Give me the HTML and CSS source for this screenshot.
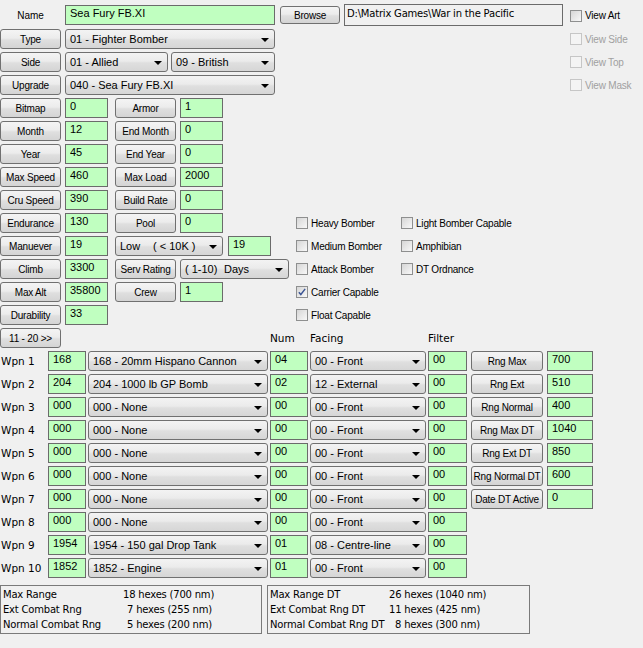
FILE: index.html
```html
<!DOCTYPE html>
<html lang="en">
<head>
    <meta charset="UTF-8">
    <meta name="viewport" content="width=device-width, initial-scale=1.0">
    <title>Aircraft Editor</title>
    <link rel="stylesheet" href="styles.css">
</head>
<body>
    <div class="form">
        <div class="top">
            <div class="name-label">Name</div>
            <input class="field" type="text" value="Sea Fury FB.XI">
            <div class="browse-cell">
                <button class="btn browse">Browse</button>
                <div class="path">D:\Matrix Games\War in the Pacific Admiral's Edition\Art\Aircraft</div>
            </div>
            <label class="check"><span class="box"></span>View Art</label>

            <button class="btn">Type</button>
            <div class="combo">01 - Fighter Bomber</div>
            <div></div>
            <label class="check off"><span class="box"></span>View Side</label>

            <button class="btn">Side</button>
            <div class="pair">
                <div class="combo side1">01 - Allied</div>
                <div class="combo side2">09 - British</div>
            </div>
            <div></div>
            <label class="check off"><span class="box"></span>View Top</label>

            <button class="btn">Upgrade</button>
            <div class="combo">040 - Sea Fury FB.XI</div>
            <div></div>
            <label class="check off"><span class="box"></span>View Mask</label>
        </div>

        <div class="mid">
            <div class="stats">
                <div class="row">
                    <button class="btn">Bitmap</button>
                    <input class="field num" type="text" value="0">
                    <button class="btn second">Armor</button>
                    <input class="field num" type="text" value="1">
                </div>
                <div class="row">
                    <button class="btn">Month</button>
                    <input class="field num" type="text" value="12">
                    <button class="btn second">End Month</button>
                    <input class="field num" type="text" value="0">
                </div>
                <div class="row">
                    <button class="btn">Year</button>
                    <input class="field num" type="text" value="45">
                    <button class="btn second">End Year</button>
                    <input class="field num" type="text" value="0">
                </div>
                <div class="row">
                    <button class="btn">Max Speed</button>
                    <input class="field num" type="text" value="460">
                    <button class="btn second">Max Load</button>
                    <input class="field num" type="text" value="2000">
                </div>
                <div class="row">
                    <button class="btn">Cru Speed</button>
                    <input class="field num" type="text" value="390">
                    <button class="btn second">Build Rate</button>
                    <input class="field num" type="text" value="0">
                </div>
                <div class="row">
                    <button class="btn">Endurance</button>
                    <input class="field num" type="text" value="130">
                    <button class="btn second">Pool</button>
                    <input class="field num" type="text" value="0">
                </div>
                <div class="row">
                    <button class="btn">Manuever</button>
                    <input class="field num" type="text" value="19">
                    <div class="combo alt"><span class="alt-low">Low</span>( &lt; 10K )</div>
                    <input class="field num after-alt" type="text" value="19">
                </div>
                <div class="row">
                    <button class="btn">Climb</button>
                    <input class="field num" type="text" value="3300">
                    <button class="btn second">Serv Rating</button>
                    <div class="combo serv"><span class="serv-range">( 1-10)</span>Days</div>
                </div>
                <div class="row">
                    <button class="btn">Max Alt</button>
                    <input class="field num" type="text" value="35800">
                    <button class="btn second">Crew</button>
                    <input class="field num" type="text" value="1">
                </div>
                <div class="row">
                    <button class="btn">Durability</button>
                    <input class="field num" type="text" value="33">
                </div>
            </div>

            <div class="flags">
                <label class="check"><span class="box"></span>Heavy Bomber</label>
                <label class="check"><span class="box"></span>Light Bomber Capable</label>
                <label class="check"><span class="box"></span>Medium Bomber</label>
                <label class="check"><span class="box"></span>Amphibian</label>
                <label class="check"><span class="box"></span>Attack Bomber</label>
                <label class="check"><span class="box"></span>DT Ordnance</label>
                <label class="check"><span class="box checked"><svg viewBox="0 0 12 12" width="10" height="10"><path d="M2.2 6.2 L4.6 9 L9.8 2.2" fill="none" stroke="#3a5494" stroke-width="1.7"/></svg></span>Carrier Capable</label>
                <div></div>
                <label class="check"><span class="box"></span>Float Capable</label>
            </div>
        </div>

        <div class="weapons">
            <button class="btn page">11 - 20 &gt;&gt;</button>
            <div class="head col-num">Num</div>
            <div class="head">Facing</div>
            <div class="head">Filter</div>

            <div class="wlabel">Wpn 1</div>
            <input class="field" type="text" value="168">
            <div class="combo">168 - 20mm Hispano Cannon</div>
            <input class="field" type="text" value="04">
            <div class="combo">00 - Front</div>
            <input class="field" type="text" value="00">
            <button class="btn rng">Rng Max</button>
            <input class="field rng-val" type="text" value="700">

            <div class="wlabel">Wpn 2</div>
            <input class="field" type="text" value="204">
            <div class="combo">204 - 1000 lb GP Bomb</div>
            <input class="field" type="text" value="02">
            <div class="combo">12 - External</div>
            <input class="field" type="text" value="00">
            <button class="btn rng">Rng Ext</button>
            <input class="field rng-val" type="text" value="510">

            <div class="wlabel">Wpn 3</div>
            <input class="field" type="text" value="000">
            <div class="combo">000 - None</div>
            <input class="field" type="text" value="00">
            <div class="combo">00 - Front</div>
            <input class="field" type="text" value="00">
            <button class="btn rng">Rng Normal</button>
            <input class="field rng-val" type="text" value="400">

            <div class="wlabel">Wpn 4</div>
            <input class="field" type="text" value="000">
            <div class="combo">000 - None</div>
            <input class="field" type="text" value="00">
            <div class="combo">00 - Front</div>
            <input class="field" type="text" value="00">
            <button class="btn rng">Rng Max DT</button>
            <input class="field rng-val" type="text" value="1040">

            <div class="wlabel">Wpn 5</div>
            <input class="field" type="text" value="000">
            <div class="combo">000 - None</div>
            <input class="field" type="text" value="00">
            <div class="combo">00 - Front</div>
            <input class="field" type="text" value="00">
            <button class="btn rng">Rng Ext DT</button>
            <input class="field rng-val" type="text" value="850">

            <div class="wlabel">Wpn 6</div>
            <input class="field" type="text" value="000">
            <div class="combo">000 - None</div>
            <input class="field" type="text" value="00">
            <div class="combo">00 - Front</div>
            <input class="field" type="text" value="00">
            <button class="btn rng">Rng Normal DT</button>
            <input class="field rng-val" type="text" value="600">

            <div class="wlabel">Wpn 7</div>
            <input class="field" type="text" value="000">
            <div class="combo">000 - None</div>
            <input class="field" type="text" value="00">
            <div class="combo">00 - Front</div>
            <input class="field" type="text" value="00">
            <button class="btn rng">Date DT Active</button>
            <input class="field rng-val" type="text" value="0">

            <div class="wlabel">Wpn 8</div>
            <input class="field" type="text" value="000">
            <div class="combo">000 - None</div>
            <input class="field" type="text" value="00">
            <div class="combo">00 - Front</div>
            <input class="field" type="text" value="00">

            <div class="wlabel">Wpn 9</div>
            <input class="field" type="text" value="1954">
            <div class="combo">1954 - 150 gal Drop Tank</div>
            <input class="field" type="text" value="01">
            <div class="combo">08 - Centre-line</div>
            <input class="field" type="text" value="00">

            <div class="wlabel">Wpn 10</div>
            <input class="field" type="text" value="1852">
            <div class="combo">1852 - Engine</div>
            <input class="field" type="text" value="01">
            <div class="combo">00 - Front</div>
            <input class="field" type="text" value="00">
        </div>

        <div class="ranges">
            <div class="rbox">
                <span>Max Range</span><span>18 hexes (700 nm)</span>
                <span>Ext Combat Rng</span><span class="pad">7 hexes (255 nm)</span>
                <span>Normal Combat Rng</span><span class="pad">5 hexes (200 nm)</span>
            </div>
            <div class="rbox right">
                <span>Max Range DT</span><span>26 hexes (1040 nm)</span>
                <span>Ext Combat Rng DT</span><span>11 hexes (425 nm)</span>
                <span>Normal Combat Rng DT</span><span class="pad-wide">8 hexes (300 nm)</span>
            </div>
        </div>
    </div>
</body>
</html>
```

FILE: styles.css
```css
body {
    margin: 0;
    width: 643px;
    height: 648px;
    overflow: hidden;
    background-color: #f0f0f0;
    font-family: "Liberation Sans", Arial, sans-serif;
    font-size: 11px;
    color: #000;
}
.form {
    padding-top: 5px;
}

/* shared controls */
.btn {
    box-sizing: border-box;
    width: 61px;
    height: 20px;
    padding: 0;
    border: 1px solid #707070;
    border-radius: 3px;
    background: linear-gradient(#f4f4f4, #ececec 45%, #dfdfdf 55%, #d4d4d4);
    font-family: "Liberation Sans", Arial, sans-serif;
    font-size: 10px;
    letter-spacing: -0.2px;
    color: #000;
    white-space: nowrap;
}
.field {
    box-sizing: border-box;
    height: 20px;
    width: 100%;
    margin: 0;
    padding: 0 3px 4px 4px;
    border: 1px solid #6b6b6b;
    background-color: #c0ffc0;
    font-family: "Liberation Sans", Arial, sans-serif;
    font-size: 11px;
    color: #000;
}
.combo {
    position: relative;
    box-sizing: border-box;
    height: 20px;
    padding-left: 4px;
    border: 1px solid #707070;
    border-radius: 3px;
    background: linear-gradient(#f3f3f3, #ebebeb 45%, #dfdfdf 55%, #d6d6d6);
    line-height: 18px;
    white-space: pre;
    overflow: hidden;
}
.combo::after {
    content: "";
    position: absolute;
    right: 5px;
    top: 8px;
    border-left: 4px solid transparent;
    border-right: 4px solid transparent;
    border-top: 4px solid #000;
}
.check {
    display: flex;
    align-items: center;
    gap: 3px;
    font-size: 10px;
    letter-spacing: -0.2px;
    white-space: nowrap;
}
.box {
    box-sizing: border-box;
    display: flex;
    align-items: center;
    justify-content: center;
    width: 12px;
    height: 12px;
    border: 1px solid #8e8f8f;
    background: linear-gradient(135deg, #d6d6d6, #f8f8f8);
}
.check.off {
    color: #a0a0a0;
}
.check.off .box {
    border-color: #c6c6c6;
    background: #f4f4f4;
}

/* top block */
.top {
    display: grid;
    grid-template-columns: 61px 210px 287px 73px;
    grid-template-rows: 21px 20px 20px 20px;
    column-gap: 4px;
    row-gap: 3px;
}
.name-label {
    font-size: 10px;
    text-align: center;
    line-height: 21px;
}
.browse-cell {
    display: flex;
    align-items: flex-start;
}
.btn.browse {
    width: 60px;
    height: 18px;
    margin: 1px 0 0 1px;
}
.path {
    box-sizing: border-box;
    width: 219px;
    height: 22px;
    margin: -1px 0 0 4px;
    padding: 0 2px;
    border: 1px solid #6b6b6b;
    font-family: "DejaVu Sans", sans-serif;
    font-size: 10px;
    letter-spacing: -0.2px;
    line-height: 17px;
    overflow: hidden;
}
.pair {
    display: flex;
    gap: 3px;
}
.side1 {
    width: 103px;
}
.side2 {
    width: 104px;
}

/* stats and flags */
.mid {
    display: flex;
    gap: 6px;
    margin-top: 3px;
}
.stats {
    width: 290px;
    display: flex;
    flex-direction: column;
    gap: 3px;
}
.row {
    display: flex;
    gap: 4px;
    height: 20px;
}
.num {
    width: 43px;
}
.second {
    margin-left: 3px;
}
.combo.alt {
    width: 108px;
    margin-left: 3px;
}
.alt-low {
    display: inline-block;
    width: 33px;
}
.after-alt {
    margin-left: 1px;
}
.combo.serv {
    width: 109px;
}
.serv-range {
    display: inline-block;
    width: 39px;
}
.flags {
    display: grid;
    grid-template-columns: 105px auto;
    grid-auto-rows: 20px;
    row-gap: 3px;
    padding-top: 115px;
}

/* weapons table */
.weapons {
    display: grid;
    grid-template-columns: 46px 38px 180px 38px 116px 39px 74px 48px;
    grid-auto-rows: 20px;
    column-gap: 2px;
    row-gap: 3px;
    margin-top: 3px;
}
.btn.page {
    grid-column: 1 / span 3;
}
.head {
    font-family: "DejaVu Sans", sans-serif;
    font-size: 10.5px;
    line-height: 20px;
}
.col-num {
    grid-column: 4;
}
.wlabel {
    grid-column: 1;
    padding-left: 1px;
    font-family: "DejaVu Sans", sans-serif;
    font-size: 10.5px;
    line-height: 21px;
    white-space: nowrap;
}
.btn.rng {
    width: 72px;
    margin-left: 2px;
}
.rng-val {
    width: 46px;
    margin-left: 2px;
}

/* range summary */
.ranges {
    display: flex;
    gap: 5px;
    margin-top: 7px;
}
.rbox {
    box-sizing: border-box;
    width: 262px;
    height: 49px;
    padding: 1px 2px;
    border: 1px solid #7a7a7a;
    display: grid;
    grid-template-columns: 120px auto;
    align-content: start;
    font-family: "DejaVu Sans", sans-serif;
    font-size: 10px;
    letter-spacing: -0.2px;
    line-height: 15px;
    white-space: nowrap;
}
.rbox.right {
    width: 263px;
    grid-template-columns: 119px auto;
}
.pad {
    padding-left: 4px;
}
.pad-wide {
    padding-left: 6px;
}
```
